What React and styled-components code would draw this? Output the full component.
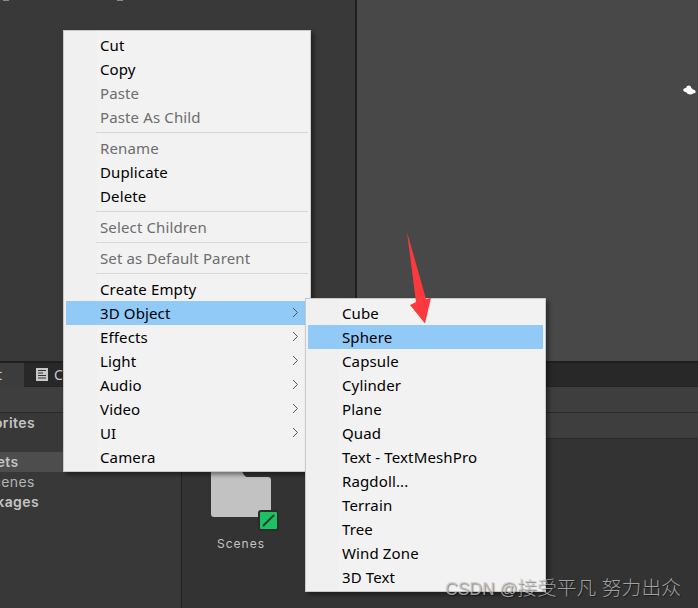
import styled, { createGlobalStyle } from "styled-components";

const GlobalStyle = createGlobalStyle`
  html, body {
    margin: 0;
    padding: 0;
    background: #333333;
  }
  * {
    box-sizing: border-box;
  }
`;

const mainItems = [
  { label: "Cut" },
  { label: "Copy" },
  { label: "Paste", disabled: true },
  { label: "Paste As Child", disabled: true },
  { separator: true },
  { label: "Rename", disabled: true },
  { label: "Duplicate" },
  { label: "Delete" },
  { separator: true },
  { label: "Select Children", disabled: true },
  { separator: true },
  { label: "Set as Default Parent", disabled: true },
  { separator: true },
  { label: "Create Empty" },
  { label: "3D Object", active: true, sub: true },
  { label: "Effects", sub: true },
  { label: "Light", sub: true },
  { label: "Audio", sub: true },
  { label: "Video", sub: true },
  { label: "UI", sub: true },
  { label: "Camera" },
];

const subItems = [
  { label: "Cube" },
  { label: "Sphere", active: true },
  { label: "Capsule" },
  { label: "Cylinder" },
  { label: "Plane" },
  { label: "Quad" },
  { label: "Text - TextMeshPro" },
  { label: "Ragdoll..." },
  { label: "Terrain" },
  { label: "Tree" },
  { label: "Wind Zone" },
  { label: "3D Text" },
];

const Chevron = () => (
  <ChevronIcon viewBox="0 0 7 11" width="7" height="11">
    <path d="M1 1l4.5 4.5L1 10" fill="none" stroke="#555" strokeWidth="1" />
  </ChevronIcon>
);

const MenuList = ({ items }) =>
  items.map((item, i) =>
    item.separator ? (
      <Separator key={i} />
    ) : (
      <MenuRow key={i} $active={item.active} $disabled={item.disabled}>
        {item.label}
        {item.sub && <Chevron />}
      </MenuRow>
    )
  );

const App = () => {
  return (
    <Page>
      <GlobalStyle />
      <TopArea>
        <Hierarchy>
          <Speck />
          <Speck />
        </Hierarchy>
        <SceneView>
          <svg viewBox="0 0 13 10" width="13" height="10">
            <path
              d="M0.2 4.6Q.8 2.8 3 2.900Q3.600 .4 6 .5Q8 .6 8.500 3.200Q9.500 3.600 10 4.600Q12.800 4.900 12.700 6.900Q12.400 8.500 10.500 8.200Q8.500 9.800 6 9.300Q4.400 9 3.500 7.400Q.4 7.200.2 4.600Z"
              fill="#fff"
            />
          </svg>
        </SceneView>
      </TopArea>

      <TabBar>
        <ProjectTab>t</ProjectTab>
        <ConsoleTab>
          <svg viewBox="0 0 12 13" width="12" height="13">
            <path d="M0 0h12v13H0z" fill="#c8c8c8" />
            <path d="M2 2.500h8M2 5h5M2 7.500h8M2 10h8" stroke="#333" strokeWidth="1.200" />
          </svg>
          Console
        </ConsoleTab>
      </TabBar>
      <Toolbar />

      <Browser>
        <TreePane>
          <TreeRow $bold $offset={-31}>Favorites</TreeRow>
          <TreeSpacer />
          <TreeRow $bold $selected $offset={-30}>Assets</TreeRow>
          <TreeRow $offset={-16.5}>Scenes</TreeRow>
          <TreeRow $bold $offset={-30}>Packages</TreeRow>
        </TreePane>
        <AssetPane>
          <PathBar />
          <AssetGrid>
            <AssetTile>
              <FolderWrap>
                <svg viewBox="0 0 60 49" width="60" height="49">
                  <path
                    d="M3 0h26l4 7q1.500 2 3 2h21a3 3 0 0 1 3 3v34a3 3 0 0 1-3 3H3a3 3 0 0 1-3-3V3a3 3 0 0 1 3-3z"
                    fill="#c2c2c2"
                  />
                </svg>
                <Badge>
                  <svg viewBox="0 0 17 17" width="17" height="17">
                    <path d="M3.500 13.500L13.500 3.500" stroke="#2b3a30" strokeWidth="2" strokeLinecap="round" />
                  </svg>
                </Badge>
              </FolderWrap>
              <AssetName>Scenes</AssetName>
            </AssetTile>
          </AssetGrid>
        </AssetPane>
      </Browser>

      <ContextMenu>
        <MenuList items={mainItems} />
      </ContextMenu>
      <SubMenu>
        <MenuList items={subItems} />
      </SubMenu>

      <Arrow viewBox="0 0 27 94" width="27" height="94">
        <path d="M2 0L21 67L26 66L20 91.500L5 73L11 70Z" fill="#fc3a3e" />
      </Arrow>

      <Watermark>
        CSDN @<WatermarkCjk>接受平凡 努力出众</WatermarkCjk>
      </Watermark>
    </Page>
  );
};

const Page = styled.div`
  position: relative;
  width: 698px;
  height: 608px;
  overflow: hidden;
  display: flex;
  flex-direction: column;
  background: #333333;
  font-family: "Noto Sans", "Liberation Sans", sans-serif;
`;

const TopArea = styled.div`
  display: flex;
  height: 361px;
  flex: none;
`;

const Hierarchy = styled.div`
  width: 355px;
  background: #393939;
  border-right: 2px solid transparent;
  display: flex;
  gap: 108px;
  padding-left: 3px;
  align-items: flex-start;
`;

const Speck = styled.div`
  width: 6px;
  height: 1px;
  background: #8a8a8a;
`;

const SceneView = styled.div`
  flex: 1;
  background: #484848;
  border-left: 2px solid #1f1f1f;
  display: flex;
  justify-content: flex-end;
  align-items: flex-start;
  padding: 85px 2px 0 0;
`;

const TabBar = styled.div`
  display: flex;
  height: 26px;
  flex: none;
  background: #282828;
  border-top: 2px solid #1f1f1f;
  border-bottom: 1px solid #242424;
  font-size: 14px;
  color: #c8c8c8;
`;

const ProjectTab = styled.div`
  width: 24px;
  margin-bottom: -1px;
  background: #3c3c3c;
  line-height: 23px;
  text-indent: -3px;
  overflow: hidden;
`;

const ConsoleTab = styled.div`
  display: flex;
  align-items: center;
  gap: 6px;
  padding-left: 12px;
`;

const Toolbar = styled.div`
  height: 26px;
  flex: none;
  background: #3e3e3e;
  border-bottom: 1px solid #2a2a2a;
`;

const Browser = styled.div`
  flex: 1;
  display: flex;
  min-height: 0;
`;

const TreePane = styled.div`
  width: 182px;
  flex: none;
  background: #383838;
  border-right: 1px solid #222222;
`;

const TreeRow = styled.div`
  height: 20px;
  line-height: 20px;
  font-family: Inter, "Liberation Sans", sans-serif;
  font-size: 14px;
  letter-spacing: 0.4px;
  white-space: nowrap;
  overflow: hidden;
  font-weight: ${({ $bold }) => ($bold ? 600 : 400)};
  color: ${({ $bold }) => ($bold ? "#c4c4c4" : "#b4b4b4")};
  background: ${({ $selected }) => ($selected ? "#4d4d4d" : "transparent")};
  text-indent: ${({ $offset }) => $offset}px;
`;

const TreeSpacer = styled.div`
  height: 19px;
`;

const AssetPane = styled.div`
  flex: 1;
  display: flex;
  flex-direction: column;
  background: #333333;
`;

const PathBar = styled.div`
  height: 26px;
  flex: none;
  background: #3e3e3e;
  border-bottom: 1px solid #2a2a2a;
`;

const AssetGrid = styled.div`
  padding: 29px 0 0 29px;
`;

const AssetTile = styled.div`
  width: 60px;
  display: flex;
  flex-direction: column;
  align-items: center;
`;

const FolderWrap = styled.div`
  position: relative;
  width: 60px;
  height: 49px;

  svg {
    display: block;
  }
`;

const Badge = styled.div`
  position: absolute;
  left: 47px;
  top: 42px;
  width: 21px;
  height: 21px;
  display: flex;
  align-items: center;
  justify-content: center;
  background: #1ac262;
  border: 2px solid #2c2c2c;
  border-radius: 3px;
`;

const AssetName = styled.div`
  margin-top: 19px;
  font-family: Inter, "Liberation Sans", sans-serif;
  font-size: 12px;
  letter-spacing: 1px;
  color: #c4c4c4;
`;

const ContextMenu = styled.div`
  position: absolute;
  left: 63px;
  top: 30px;
  width: 248px;
  height: 442px;
  padding: 2px;
  background: linear-gradient(to right, #f0f0f0 33px, #f2f2f2 33px);
  border: 1px solid #c9c9c9;
  box-shadow: 3px 3px 4px rgba(0, 0, 0, 0.4);
`;

const SubMenu = styled(ContextMenu)`
  left: 305px;
  top: 298px;
  width: 241px;
  height: 294px;
`;

const MenuRow = styled.div`
  position: relative;
  height: 24px;
  line-height: 24px;
  padding-left: 34px;
  font-size: 15px;
  letter-spacing: 0.13px;
  white-space: nowrap;
  color: ${({ $disabled }) => ($disabled ? "#6d6d6d" : "#000000")};
  background: ${({ $active }) => ($active ? "#91c9f7" : "transparent")};
`;

const ChevronIcon = styled.svg`
  position: absolute;
  right: 9px;
  top: 6px;
`;

const Separator = styled.div`
  height: 1px;
  margin: 3px 0 3px 30px;
  background: #d7d7d7;
`;

const Arrow = styled.svg`
  position: absolute;
  left: 405px;
  top: 232px;
`;

const Watermark = styled.div`
  position: absolute;
  left: 445px;
  top: 576px;
  font-family: "Liberation Sans", "Noto Sans CJK SC", sans-serif;
  font-size: 17.500px;
  line-height: 24px;
  white-space: nowrap;
  color: rgba(200, 200, 200, 0.75);
  text-shadow: 1px 1px 1px rgba(0, 0, 0, 0.45);
`;

const WatermarkCjk = styled.span`
  font-size: 19.800px;
  font-weight: 300;
`;

export default App;
